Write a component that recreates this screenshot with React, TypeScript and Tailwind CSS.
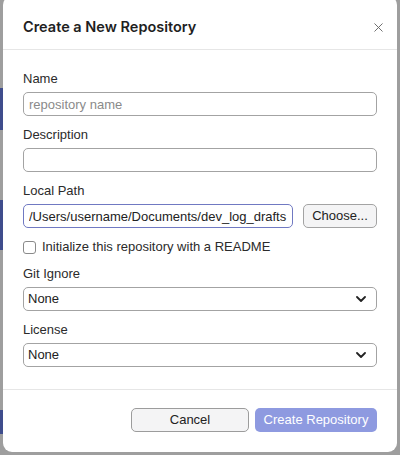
import { X } from "lucide-react";

const font = { fontFamily: "'Liberation Sans', Arial, sans-serif" };

function Label({ children }: { children: React.ReactNode }) {
  return <label className="mb-[5px] block h-4 text-[13px] leading-4 text-[#2b2b2b]">{children}</label>;
}

function Chevron() {
  return (
    <svg
      viewBox="0 0 10 6"
      className="pointer-events-none absolute right-[11px] top-1/2 h-[6px] w-[10px] -translate-y-1/2"
      fill="none"
      stroke="#222"
      strokeWidth="1.8"
      strokeLinecap="round"
      strokeLinejoin="round"
    >
      <path d="M1 1l4 4 4-4" />
    </svg>
  );
}

function Select({ value }: { value: string }) {
  return (
    <div className="relative">
      <select
        defaultValue={value}
        className="block h-6 w-full appearance-none rounded-[5px] border border-[#a3a3a3] bg-white pl-[4px] text-[13px] text-[#222] outline-none"
      >
        <option>None</option>
      </select>
      <Chevron />
    </div>
  );
}

export default function App() {
  return (
    <div className="relative h-[455px] w-[400px] overflow-hidden bg-[#9e9e9e]" style={font}>
      {/* backdrop peeking out on the left */}
      <div className="flex h-full w-[4px] flex-col">
        <div className="h-[88px]" />
        <div className="h-[42px] bg-[#3f4d8c]" />
        <div className="h-[70px]" />
        <div className="h-[50px] bg-[#3f4d8c]" />
        <div className="h-[160px]" />
        <div className="h-[24px] bg-[#3f4d8c]" />
      </div>

      <div className="absolute left-[3px] top-[-4px] flex w-[394px] flex-col rounded-[9px] bg-white">
        <div className="flex h-[54px] items-center justify-between border-b border-[#e6e6e6] pl-[20px] pr-[11px] pt-[9px]">
          <h2
            className="text-[14.5px] font-semibold leading-5 text-[#1f1f1f]"
            style={{ fontFamily: "Inter, 'Liberation Sans', sans-serif" }}
          >
            Create a New Repository
          </h2>
          <button className="flex h-4 w-4 items-center justify-center text-[#666]">
            <X className="h-[15px] w-[15px]" strokeWidth={1.5} />
          </button>
        </div>

        <div className="flex flex-col gap-[11px] px-[20px] pb-[22px] pt-[21px]">
          <div>
            <Label>Name</Label>
            <input
              placeholder="repository name"
              className="block h-6 w-full rounded-[5px] border border-[#a3a3a3] px-[5px] text-[13px] text-[#222] outline-none placeholder:text-[#8a8a8a]"
            />
          </div>
          <div>
            <Label>Description</Label>
            <input className="block h-6 w-full rounded-[5px] border border-[#a3a3a3] px-[5px] text-[13px] outline-none" />
          </div>
          <div>
            <Label>Local Path</Label>
            <div className="flex gap-[10px]">
              <input
                defaultValue="/Users/username/Documents/dev_log_drafts"
                className="block h-6 w-[270px] rounded-[5px] border border-[#7079c2] px-[5px] text-[13px] text-[#222] outline-none"
              />
              <button className="h-6 flex-1 rounded-[5px] border border-[#a3a3a3] bg-[#f4f4f5] text-[13px] text-[#222]">
                Choose...
              </button>
            </div>
          </div>
          <label className="flex h-4 items-center gap-[6px] text-[13px] text-[#2b2b2b]">
            <span className="h-[13px] w-[13px] rounded-[3px] border border-[#8a8a8a] bg-white" />
            Initialize this repository with a README
          </label>
          <div>
            <Label>Git Ignore</Label>
            <Select value="None" />
          </div>
          <div>
            <Label>License</Label>
            <Select value="None" />
          </div>
        </div>

        <div className="flex justify-end gap-[6px] border-t border-[#e6e6e6] px-[20px] pb-[20px] pt-[18px]">
          <button className="h-6 w-[118px] rounded-[5px] border border-[#9c9c9c] bg-[#f4f4f5] text-[13px] text-[#222]">
            Cancel
          </button>
          <button className="h-6 w-[122px] rounded-[5px] bg-[#8e9ae0] text-[13px] text-white">
            Create Repository
          </button>
        </div>
      </div>
    </div>
  );
}
